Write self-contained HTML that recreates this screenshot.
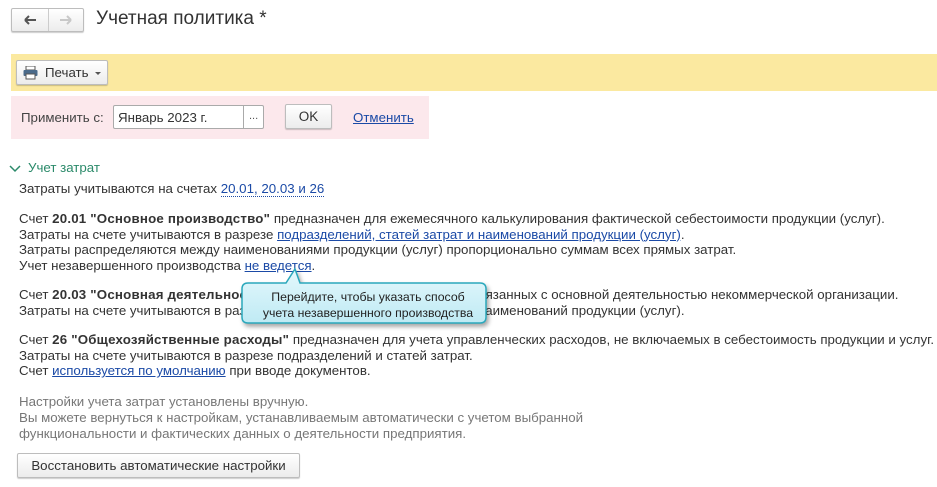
<!DOCTYPE html>
<html><head><meta charset="utf-8"><style>
body{margin:0;width:937px;height:487px;background:#fff;font-family:"Liberation Sans",Arial,sans-serif;font-size:13.3px;color:#333;position:relative;overflow:hidden}
.a{position:absolute;white-space:nowrap}
a{color:#1b4aa6;text-decoration:underline}
.btn{position:absolute;border:1px solid #bdbdbd;border-radius:2px;background:linear-gradient(#fff,#ececec);box-shadow:0 1px 1px rgba(0,0,0,.2);box-sizing:border-box;text-align:center;color:#333}
.t{position:absolute;left:19px;white-space:nowrap;line-height:15.5px}
b{color:#333;letter-spacing:0.2px}
</style></head><body>
<div class="btn" style="left:11px;top:8px;width:73px;height:24px;"></div>
<div class="a" style="left:48px;top:9px;width:1px;height:22px;background:#ccc"></div>
<svg class="a" style="left:22px;top:14px" width="60" height="12"><path d="M3 6h11M3 6l4-4M3 6l4 4" stroke="#555" stroke-width="2" fill="none"/><path d="M38 6h11M49 6l-4-4M49 6l-4 4" stroke="#c8c8c8" stroke-width="2" fill="none"/></svg>
<div class="a" style="left:96px;top:8px;font-size:19px;color:#333">Учетная политика *</div>
<div class="a" style="left:11px;top:54px;width:926px;height:37px;background:#fbe9a0"></div>
<div class="btn" style="left:16px;top:60px;width:92px;height:25px;"></div>
<svg class="a" style="left:23px;top:66px" width="16" height="14"><rect x="3" y="0" width="9" height="4" fill="#fff" stroke="#555"/><rect x="0.5" y="4" width="14" height="6" rx="1" fill="#4a6a8a"/><rect x="3" y="8" width="9" height="5" fill="#fff" stroke="#555"/></svg>
<div class="a" style="left:45px;top:65px;">Печать</div>
<div class="a" style="left:95px;top:72px;width:0;height:0;border-left:3px solid transparent;border-right:3px solid transparent;border-top:3px solid #555"></div>
<div class="a" style="left:11px;top:96px;width:418px;height:43px;background:#fce8ec"></div>
<div class="a" style="left:21px;top:110px;color:#444">Применить с:</div>
<div class="a" style="left:113px;top:105px;width:151px;height:24px;border:1px solid #aaa;border-radius:2px;background:#fff;box-sizing:border-box"></div>
<div class="a" style="left:243px;top:105px;width:1px;height:24px;background:#aaa"></div>
<div class="a" style="left:118px;top:110px;color:#333">Январь 2023 г.</div>
<div class="a" style="left:249px;top:110px;color:#555;font-size:11px">...</div>
<div class="btn" style="left:285px;top:104px;width:47px;height:25px;line-height:23px;font-size:13.5px">OK</div>
<div class="a" style="left:353px;top:110px;"><a>Отменить</a></div>
<svg class="a" style="left:9px;top:164px" width="12" height="10"><path d="M1 2l5 5 5-5" stroke="#2b8a6a" stroke-width="1.5" fill="none"/></svg>
<div class="a" style="left:28px;top:160px;color:#2b8a6a;">Учет затрат</div>
<div class="t" style="top:181px">Затраты учитываются на счетах <a style="text-decoration:none;border-bottom:1px dotted #1b4aa6">20.01, 20.03 и 26</a></div>
<div class="t" style="top:211px">Счет <b>20.01 "Основное производство"</b> предназначен для ежемесячного калькулирования фактической себестоимости продукции (услуг).<br>Затраты на счете учитываются в разрезе <a>подразделений, статей затрат и наименований продукции (услуг)</a>.<br>Затраты распределяются между наименованиями продукции (услуг) пропорционально суммам всех прямых затрат.<br>Учет незавершенного производства <a>не ведется</a>.</div>
<div class="t" style="top:287px">Счет <b>20.03 "Основная деятельность"</b> предназначен для учета затрат, связанных с основной деятельностью некоммерческой организации.<br>Затраты на счете учитываются в разрезе подразделений, статей затрат и наименований продукции (услуг).</div>
<div class="t" style="top:332px">Счет <b>26 "Общехозяйственные расходы"</b> предназначен для учета управленческих расходов, не включаемых в себестоимость продукции и услуг.<br>Затраты на счете учитываются в разрезе подразделений и статей затрат.<br>Счет <a>используется по умолчанию</a> при вводе документов.</div>
<div class="t" style="top:394px;color:#777;line-height:16px">Настройки учета затрат установлены вручную.<br>Вы можете вернуться к настройкам, устанавливаемым автоматически с учетом выбранной<br>функциональности и фактических данных о деятельности предприятия.</div>
<div class="btn" style="left:17px;top:453px;width:283px;height:25px;line-height:23px">Восстановить автоматические настройки</div>
<svg class="a" style="left:238px;top:265px" width="256" height="66">
<defs><linearGradient id="g" x1="0" y1="0" x2="0" y2="1"><stop offset="0" stop-color="#e4f8fc"/><stop offset="1" stop-color="#bfeaf4"/></linearGradient></defs>
<path d="M10 18H48L57 4L62 18H242Q248 18 248 24V52Q248 58 242 58H10Q4 58 4 52V24Q4 18 10 18Z" fill="url(#g)" stroke="#2aa8bc" stroke-width="1.5" style="filter:drop-shadow(2px 3px 2px rgba(0,0,0,.35))"/>
</svg>
<div class="a" style="left:243px;top:290px;width:250px;text-align:center;color:#222;line-height:15.5px;font-size:12.3px">Перейдите, чтобы указать способ<br>учета незавершенного производства</div>
</body></html>
